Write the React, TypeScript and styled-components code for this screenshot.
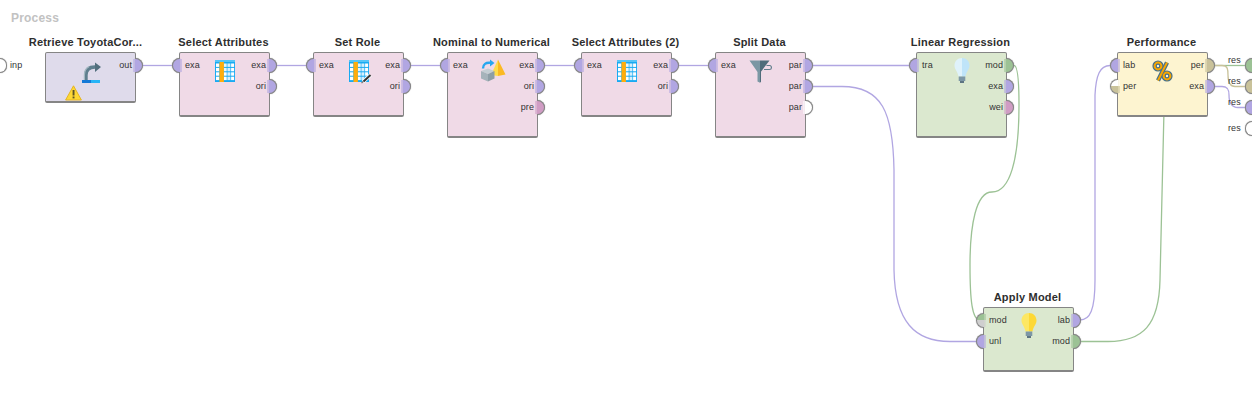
import React from 'react';
import styled, { createGlobalStyle } from 'styled-components';

const GlobalStyle = createGlobalStyle`
  html, body {
    margin: 0;
    padding: 0;
    background: #fff;
  }
  body {
    font-family: "Liberation Sans", Arial, sans-serif;
  }
`;

const PURPLE = '#b1a6e2';
const GREEN = '#9cc295';
const TAN = '#c9c29a';
const PINK = '#d09cc4';
const BORDER = '#858585';

const Canvas = styled.div`
  position: relative;
  width: 1252px;
  height: 409px;
  overflow: hidden;
  background: #fff;
`;

const ProcessTitle = styled.h1`
  margin: 0;
  padding: 10px 0 0 11px;
  font-size: 12px;
  line-height: 16px;
  font-weight: 700;
  letter-spacing: 0.2px;
  color: #c2c2c2;
`;

const WireLayer = styled.svg`
  position: absolute;
  left: 0;
  top: 0;
  pointer-events: none;
`;

const NodeWrap = styled.div<{ $x: number; $y: number }>`
  position: absolute;
  left: ${(p) => p.$x}px;
  top: ${(p) => p.$y - 17}px;
  width: 91px;
`;

const NodeTitle = styled.div<{ $pull: number }>`
  display: flex;
  justify-content: center;
  height: 17px;
  padding-right: ${(p) => p.$pull}px;
  font-size: 11px;
  line-height: 14px;
  font-weight: 700;
  letter-spacing: 0.2px;
  color: #2e2e2e;
  white-space: nowrap;
`;

const NodeBox = styled.div<{ $h: number; $tint: string }>`
  position: relative;
  box-sizing: border-box;
  height: ${(p) => p.$h}px;
  border: 1px solid ${BORDER};
  border-bottom-width: 2px;
  border-radius: 2px;
  background: ${(p) => p.$tint};
  display: grid;
  grid-template-columns: 1fr 32px 1fr;
  align-items: start;
`;

const PortColumn = styled.div<{ $side: 'in' | 'out' }>`
  display: flex;
  flex-direction: column;
  align-items: ${(p) => (p.$side === 'in' ? 'flex-start' : 'flex-end')};
  gap: 7px;
  padding-top: 5px;
`;

const PortRow = styled.div`
  display: flex;
  align-items: center;
  height: 14px;
  gap: 3px;
`;

const PortLabel = styled.span<{ $side: 'in' | 'out' }>`
  font-size: 9px;
  line-height: 12px;
  letter-spacing: 0.1px;
  color: #333;
  margin-top: -1px;
  ${(p) => (p.$side === 'in' ? 'margin-left: 2px;' : '')}
`;

const Disc = styled.span<{ $side: 'in' | 'out'; $fill: string }>`
  position: relative;
  flex: none;
  box-sizing: border-box;
  width: 8px;
  height: 15px;
  background: ${(p) => p.$fill};
  border: 1px solid ${BORDER};
  box-shadow: 0 0 1px ${BORDER};
  ${(p) =>
    p.$side === 'in'
      ? 'margin-left: -8px; border-right: 0; border-radius: 8px 0 0 8px;'
      : 'margin-right: -8px; border-left: 0; border-radius: 0 8px 8px 0;'}

  &::after {
    content: '';
    position: absolute;
    top: 0;
    bottom: 0;
    width: 2px;
    background: ${(p) => p.$fill};
    opacity: 0.55;
    ${(p) => (p.$side === 'in' ? 'right: -2px;' : 'left: -2px;')}
  }
`;

const IconSlot = styled.div`
  width: 32px;
  height: 32px;
  svg {
    display: block;
  }
`;

const WarningBadge = styled.svg`
  position: absolute;
  left: 19px;
  top: 32px;
`;

const EdgePort = styled.div<{ $y: number }>`
  position: absolute;
  left: 0;
  top: ${(p) => p.$y}px;
  display: flex;
  align-items: center;
  gap: 3px;
  height: 15px;
`;

const EdgeDisc = styled.span`
  box-sizing: border-box;
  width: 7px;
  height: 15px;
  background: #fff;
  border: 1px solid ${BORDER};
  box-shadow: 0 0 1px ${BORDER};
  border-left: 0;
  border-radius: 0 8px 8px 0;
`;

const ResultPorts = styled.div`
  position: absolute;
  left: 1228px;
  top: 58px;
  display: flex;
  flex-direction: column;
  gap: 6px;
`;

const ResultRow = styled.div`
  display: flex;
  justify-content: space-between;
  width: 24px;
  height: 15px;
`;

const ResultLabel = styled.span<{ $lift: number }>`
  font-size: 9px;
  line-height: 12px;
  letter-spacing: 0.1px;
  color: #333;
  margin-top: ${(p) => p.$lift}px;
`;

const ResultDisc = styled.span<{ $fill: string }>`
  box-sizing: border-box;
  width: 7px;
  height: 15px;
  background: ${(p) => p.$fill};
  border: 1px solid ${BORDER};
  box-shadow: 0 0 1px ${BORDER};
  border-right: 0;
  border-radius: 8px 0 0 8px;
`;

type Port = { label: string; fill: string };

const p = (label: string, fill: string = PURPLE): Port => ({ label, fill });

const TableIcon = ({ pencil }: { pencil?: boolean }) => {
  const xs = [0, 1, 2, 3, 4];
  const ys = [0, 1, 2, 3];
  return (
    <svg width="32" height="32" viewBox="0 0 32 32">
      <rect x="6" y="7" width="20" height="22" fill="#18aaf2" />
      <rect x="6" y="7" width="20" height="2" fill="#56c5f7" />
      {ys.map((r) =>
        xs.map((c) => (
          <rect
            key={`${r}-${c}`}
            x={7 + c * 3.7 + (c > 1 ? 0.3 : 0)}
            y={10.5 + r * 4.4}
            width="3"
            height="3.4"
            fill={c === 3 ? '#d7effc' : c === 2 && r < 2 ? '#e8f6fd' : '#fff'}
          />
        )),
      )}
      <rect x="10.5" y="9" width="4.4" height="20" fill="#ffad0d" />
      {pencil && (
        <g>
          <path d="M20 29 L27.5 22" stroke="#fff" strokeWidth="3.6" />
          <path d="M20.5 28.5 L27.5 22" stroke="#333" strokeWidth="2" />
          <path d="M18.5 30 L20.5 28.2" stroke="#777" strokeWidth="1.2" />
        </g>
      )}
    </svg>
  );
};

const RetrieveIcon = () => (
  <svg width="32" height="32" viewBox="0 0 32 32">
    <path d="M11 27 V22 C11 17 14 14 20 14" fill="none" stroke="#5f7f8e" strokeWidth="3.4" />
    <path d="M9.4 27 V22 C9.4 18 11 15 14 13.6" fill="none" stroke="#a3b7c1" strokeWidth="1.2" />
    <path d="M20 9.5 L26 14 L20 19 Z" fill="#536f7d" />
    <rect x="7" y="27" width="9" height="3" fill="#1579d6" />
    <rect x="16" y="27" width="9" height="3" fill="#27b4f6" />
  </svg>
);

const NominalIcon = () => (
  <svg width="32" height="32" viewBox="0 0 32 32">
    <path d="M21 6.5 L28.5 21.5 L21 23 Z" fill="#fbb923" />
    <path d="M21 6.5 L14 22 L21 23 Z" fill="#ffdc4a" />
    <path d="M4 18 L11 15.5 L17.5 18 L11 21 Z" fill="#c3ced3" />
    <path d="M4 18 L11 21 V28.5 L4 25.5 Z" fill="#a5b3ba" />
    <path d="M11 21 L17.5 18 V25.5 L11 28.5 Z" fill="#8d9ea6" />
    <path d="M6 15.5 C6 11 9 9.5 13 9.8" fill="none" stroke="#27a7ef" strokeWidth="2.4" />
    <path d="M13 6.5 L17.5 10 L13 13.5 Z" fill="#27a7ef" />
  </svg>
);

const FunnelIcon = () => (
  <svg width="32" height="32" viewBox="0 0 32 32">
    <path d="M4.5 7.5 H15 V29.8 L12.5 28.5 V19 Z" fill="#7b97a4" />
    <path d="M15 7.5 H24.5 L15 20 Z" fill="#4f6c7b" />
    <path d="M15 19 L16 18 V28.8 L15 29.8 Z" fill="#4f6c7b" />
    <path d="M21.5 12.5 H25 C27 13 27 16.5 24.5 16.5 H19" fill="none" stroke="#5f7d8b" strokeWidth="1.2" />
  </svg>
);

const BulbIcon = ({ left, right }: { left: string; right: string }) => (
  <svg width="32" height="32" viewBox="0 0 32 32">
    <path d="M16 5 C11.5 5 8.5 8.5 8.5 12.5 C8.5 16.5 12 19 12.5 23.5 H16 Z" fill={left} />
    <path d="M16 5 C20.5 5 23.5 8.5 23.5 12.5 C23.5 16.5 20 19 19.5 23.5 H16 Z" fill={right} />
    <rect x="12.7" y="23.5" width="6.6" height="4.5" fill="#7d97a6" />
    <rect x="14" y="28" width="4" height="2" fill="#5d7482" />
  </svg>
);

const PercentIcon = () => (
  <svg width="32" height="32" viewBox="0 0 32 32">
    <g fill="none" stroke="#44708c" strokeWidth="4.4">
      <circle cx="11" cy="13" r="3.4" />
      <circle cx="20" cy="23" r="3.4" />
      <path d="M20 9.5 L11 27.5" />
    </g>
    <g fill="none" stroke="#f7a600" strokeWidth="2">
      <circle cx="11" cy="13" r="3.4" />
      <circle cx="20" cy="23" r="3.4" />
      <path d="M20 9.5 L11 27.5" />
    </g>
  </svg>
);

type NodeProps = {
  x: number;
  y: number;
  h: number;
  tint: string;
  title: string;
  pull?: number;
  inputs?: Port[];
  outputs?: Port[];
  icon: React.ReactNode;
  warning?: boolean;
};

const Node = ({ x, y, h, tint, title, pull = 2, inputs = [], outputs = [], icon, warning }: NodeProps) => (
  <NodeWrap $x={x} $y={y}>
    <NodeTitle $pull={pull}>{title}</NodeTitle>
    <NodeBox $h={h} $tint={tint}>
      <PortColumn $side="in">
        {inputs.map((port) => (
          <PortRow key={port.label}>
            <Disc $side="in" $fill={port.fill} />
            <PortLabel $side="in">{port.label}</PortLabel>
          </PortRow>
        ))}
      </PortColumn>
      <IconSlot>{icon}</IconSlot>
      <PortColumn $side="out">
        {outputs.map((port, i) => (
          <PortRow key={port.label + i}>
            <PortLabel $side="out">{port.label}</PortLabel>
            <Disc $side="out" $fill={port.fill} />
          </PortRow>
        ))}
      </PortColumn>
      {warning && (
        <WarningBadge width="17" height="16" viewBox="0 0 17 16">
          <path d="M8.5 0.8 L16.4 15 H0.6 Z" fill="#fdd835" stroke="#e5b422" strokeWidth="1" />
          <rect x="7.6" y="5" width="1.9" height="5.5" fill="#5c5326" />
          <rect x="7.6" y="11.5" width="1.9" height="1.9" fill="#5c5326" />
        </WarningBadge>
      )}
    </NodeBox>
  </NodeWrap>
);

const BLEND = '#f0dae7';
const MODEL = '#dbe8cf';
const PERF = '#fdf4d0';
const RETRIEVE = '#dfdbeb';

const Wires = () => (
  <WireLayer width="1252" height="409" viewBox="0 0 1252 409" fill="none" strokeWidth="1.3">
    <g stroke={PURPLE}>
      <path d="M142 65.5 H172" />
      <path d="M276 65.5 H306" />
      <path d="M410 65.5 H440" />
      <path d="M544 65.5 H574" />
      <path d="M678 65.5 H708" />
      <path d="M812 65.5 H909" />
      <path d="M812 86.5 H842 C882 86.5 893 112 894 170 V270 C895 322 915 341.5 950 341.5 H976" />
      <path d="M1080 320 C1090 320 1095 310 1095 280 V95 C1096 75 1100 65.5 1110 65.5" />
      <path d="M1214 86.5 H1222 C1228 86.5 1229 90 1229 95 C1229 104 1232 107.5 1238 107.5 H1245" />
    </g>
    <g stroke={GREEN}>
      <path d="M1014 65.5 C1018 65.5 1019 85 1019 105 C1019 160 1010 192 992 192 C976 192 970 225 970 265 C970 300 972 320 980 320" />
      <path d="M1080 341.5 H1108 C1143 341.5 1159 325 1160 280 L1164 110" />
      <path d="M1214 65.5 H1245" />
    </g>
    <g stroke={TAN}>
      <path d="M1214 65.5 H1222 C1228 65.5 1228 70 1228 75 C1228 83 1230 86.5 1235 86.5 H1245" />
    </g>
  </WireLayer>
);

const App = () => (
  <>
    <GlobalStyle />
    <Canvas>
      <ProcessTitle>Process</ProcessTitle>
      <Wires />
      <EdgePort $y={58}>
        <EdgeDisc />
        <PortLabel $side="out">inp</PortLabel>
      </EdgePort>
      <Node x={45} y={52} h={51} tint={RETRIEVE} title="Retrieve ToyotaCor..." pull={10} outputs={[p('out')]} icon={<RetrieveIcon />} warning />
      <Node x={179} y={52} h={65} tint={BLEND} title="Select Attributes" inputs={[p('exa')]} outputs={[p('exa'), p('ori')]} icon={<TableIcon />} />
      <Node x={313} y={52} h={65} tint={BLEND} title="Set Role" inputs={[p('exa')]} outputs={[p('exa'), p('ori')]} icon={<TableIcon pencil />} />
      <Node x={447} y={52} h={86} tint={BLEND} title="Nominal to Numerical" inputs={[p('exa')]} outputs={[p('exa'), p('ori'), p('pre', PINK)]} icon={<NominalIcon />} />
      <Node x={581} y={52} h={65} tint={BLEND} title="Select Attributes (2)" inputs={[p('exa')]} outputs={[p('exa'), p('ori')]} icon={<TableIcon />} />
      <Node x={715} y={52} h={86} tint={BLEND} title="Split Data" inputs={[p('exa')]} outputs={[p('par'), p('par'), p('par', '#fff')]} icon={<FunnelIcon />} />
      <Node x={916} y={52} h={86} tint={MODEL} title="Linear Regression" inputs={[p('tra')]} outputs={[p('mod', GREEN), p('exa'), p('wei', PINK)]} icon={<BulbIcon left="#dff2fb" right="#bfe4f9" />} />
      <Node x={983} y={307} h={65} tint={MODEL} title="Apply Model" inputs={[p('mod', `linear-gradient(${GREEN} 45%, #cfcfcf 45%)`), p('unl')]} outputs={[p('lab'), p('mod', GREEN)]} icon={<BulbIcon left="#fde763" right="#fdd835" />} />
      <Node x={1117} y={52} h={65} tint={PERF} title="Performance" inputs={[p('lab'), p('per', `linear-gradient(#fff 45%, ${TAN} 45%)`)]} outputs={[p('per', TAN), p('exa')]} icon={<PercentIcon />} />
      <ResultPorts>
        <ResultRow>
          <ResultLabel $lift={-4}>res</ResultLabel>
          <ResultDisc $fill={GREEN} />
        </ResultRow>
        <ResultRow>
          <ResultLabel $lift={-4}>res</ResultLabel>
          <ResultDisc $fill={TAN} />
        </ResultRow>
        <ResultRow>
          <ResultLabel $lift={-4}>res</ResultLabel>
          <ResultDisc $fill={PURPLE} />
        </ResultRow>
        <ResultRow>
          <ResultLabel $lift={1}>res</ResultLabel>
          <ResultDisc $fill="#fff" />
        </ResultRow>
      </ResultPorts>
    </Canvas>
  </>
);

export default App;
